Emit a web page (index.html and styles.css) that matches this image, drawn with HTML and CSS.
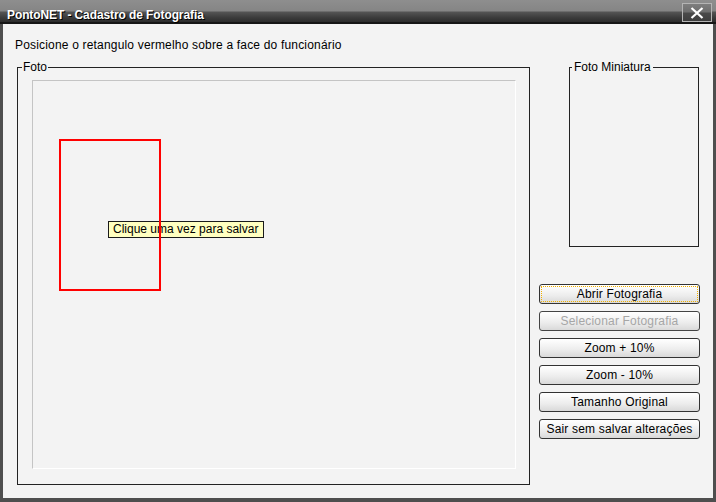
FILE: index.html
```html
<!DOCTYPE html>
<html lang="pt">
<head>
<meta charset="utf-8">
<title>PontoNET - Cadastro de Fotografia</title>
<link rel="stylesheet" href="styles.css">
</head>
<body>
<div class="window">
  <div class="titlebar">
    <span class="title">PontoNET - Cadastro de Fotografia</span>
    <button class="close" aria-label="Fechar">
      <svg width="16" height="12" viewBox="0 0 16 12"><path d="M2.5 1 L13.5 11 M13.5 1 L2.5 11" stroke="#fff" stroke-width="2.2" fill="none"/></svg>
    </button>
  </div>
  <div class="content">
    <p class="hint">Posicione o retangulo vermelho sobre a face do funcionário</p>
    <div class="main">
      <fieldset class="group photo">
        <legend>Foto</legend>
        <div class="canvas">
          <div class="tooltip">Clique uma vez para salvar</div>
          <div class="selection"></div>
        </div>
      </fieldset>
      <div class="side">
        <fieldset class="group thumb">
          <legend>Foto Miniatura</legend>
        </fieldset>
        <div class="buttons">
          <button class="btn focused">Abrir Fotografia</button>
          <button class="btn" disabled>Selecionar Fotografia</button>
          <button class="btn">Zoom + 10%</button>
          <button class="btn">Zoom - 10%</button>
          <button class="btn">Tamanho Original</button>
          <button class="btn">Sair sem salvar alterações</button>
        </div>
      </div>
    </div>
  </div>
</div>
</body>
</html>
```
FILE: styles.css
```css
* { box-sizing: border-box; }
html, body { margin: 0; padding: 0; }
body {
  width: 716px;
  height: 502px;
  overflow: hidden;
  font-family: "Liberation Sans", Arial, sans-serif;
  font-size: 12px;
  color: #000;
  background: #f3f3f3;
}
.window {
  width: 716px;
  height: 502px;
  display: flex;
  flex-direction: column;
}
.titlebar {
  height: 24px;
  flex: none;
  display: flex;
  align-items: flex-start;
  justify-content: space-between;
  background: linear-gradient(to bottom, #8e8e8e 0, #858585 11px, #555 12px, #3a3a3a 18px, #2c2c2c 22px);
  border-bottom: 2px solid #161616;
  padding: 0 4px 0 7px;
}
.title {
  font-weight: bold;
  font-size: 12px;
  line-height: 14px;
  margin-top: 8px;
  color: #fff;
  text-shadow: 1px 1px 0 #000;
  letter-spacing: -0.1px;
}
.close {
  margin-top: 3px;
  width: 30px;
  height: 19px;
  padding: 0;
  border: 1px solid #b4b4b4;
  background: linear-gradient(to bottom, #7e7e7e 0, #6e6e6e 48%, #4a4a4a 52%, #3e3e3e 100%);
  display: flex;
  align-items: center;
  justify-content: center;
}
.content {
  flex: 1;
  background: #f3f3f3;
  border-style: solid;
  border-color: #4e4e4e;
  border-width: 0 3px 4px 3px;
  padding: 14px 0 0 12px;
}
.hint {
  margin: 0;
  line-height: 15px;
  height: 15px;
  letter-spacing: 0.18px;
}
.main {
  display: flex;
  margin: 8px 0 0 2px;
}
.group {
  margin: 0;
  padding: 0;
  border: 1px solid #222;
  min-width: 0;
}
.group legend {
  padding: 0 1px;
  line-height: 12px;
  font-size: 12px;
}
.photo {
  width: 513px;
  height: 424px;
}
.photo legend { margin-left: 4px; }
.canvas {
  position: relative;
  width: 484px;
  height: 389px;
  margin: 7px 0 0 14px;
  border-style: solid;
  border-width: 1px;
  border-color: #c4c4c4 #ffffff #ffffff #c4c4c4;
}
.selection {
  position: absolute;
  left: 26px;
  top: 58px;
  width: 102px;
  height: 152px;
  border: 2px solid #ff0000;
}
.tooltip {
  position: absolute;
  left: 75px;
  top: 140px;
  width: 156px;
  height: 17px;
  background: #ffffc0;
  border: 1px solid #1a1a1a;
  padding: 0 0 0 4px;
  line-height: 15px;
  white-space: nowrap;
}
.side {
  margin-left: 9px;
  width: 161px;
  display: flex;
  flex-direction: column;
}
.thumb {
  margin-left: 30px;
  width: 130px;
  height: 186px;
}
.thumb legend { margin-left: 2px; padding: 0 2px; }
.buttons {
  margin-top: 37px;
  display: flex;
  flex-direction: column;
  gap: 7px;
}
.btn {
  height: 20px;
  width: 161px;
  padding: 0;
  font-family: "Liberation Sans", Arial, sans-serif;
  font-size: 12px;
  line-height: 18px;
  letter-spacing: 0.18px;
  color: #000;
  border: 1px solid #333;
  border-radius: 3px;
  background: linear-gradient(to bottom, #ffffff 0, #f6f6f6 30%, #ececec 60%, #d9d9d9 100%);
  text-align: center;
}
.btn:disabled {
  color: #a6a6a6;
  border-color: #444;
}
.btn.focused {
  outline: 1px dotted #f0b000;
  outline-offset: -3px;
}
```
